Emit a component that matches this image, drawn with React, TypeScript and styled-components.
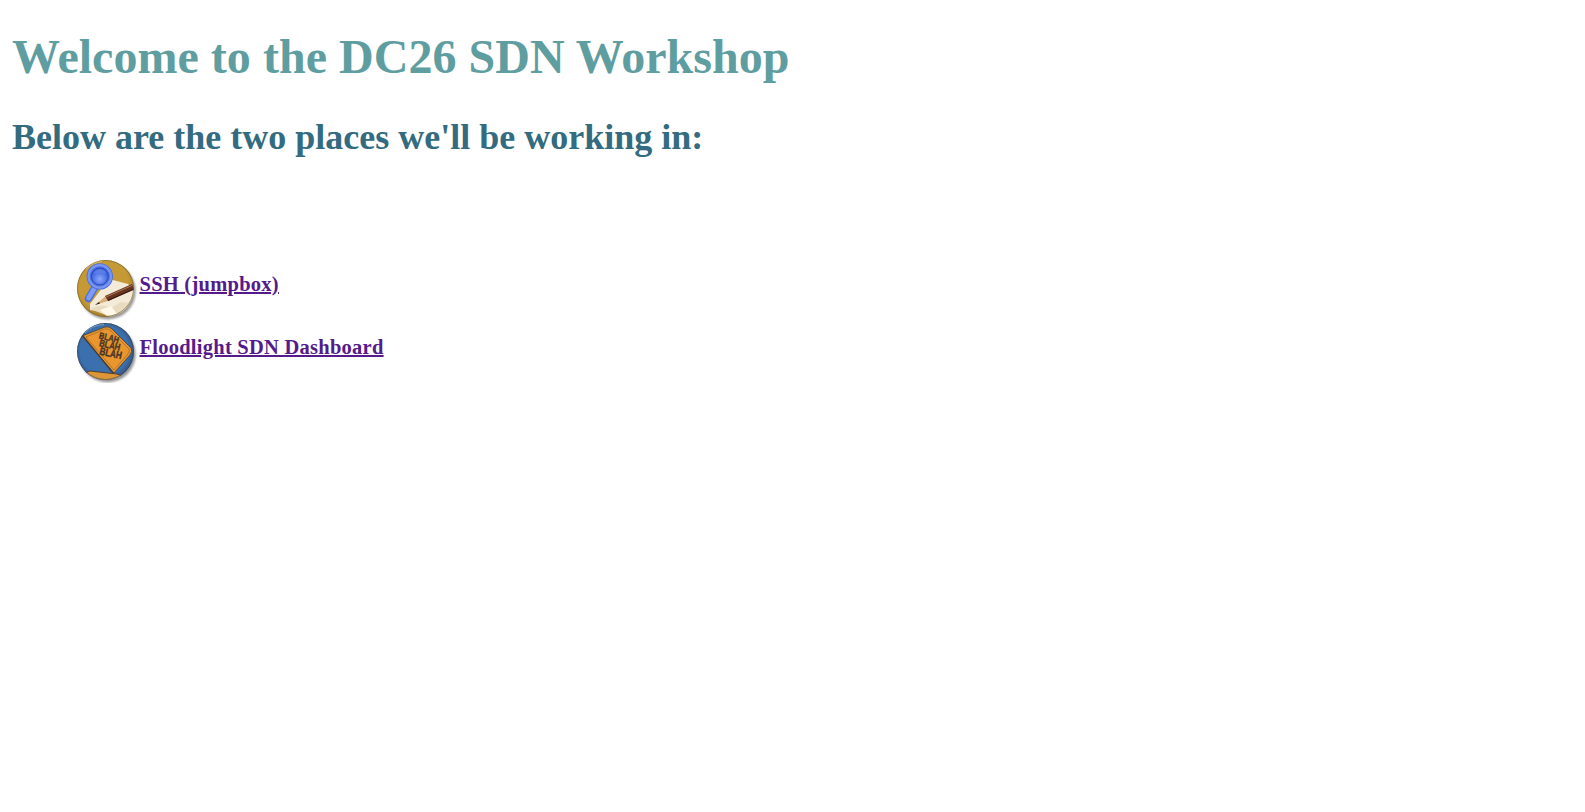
import React from "react";
import styled, { createGlobalStyle } from "styled-components";

const GlobalStyle = createGlobalStyle`
  body {
    margin: 0;
    background: #fff;
    font-family: "Liberation Serif", "Times New Roman", serif;
  }
`;

const Page = styled.main`
  padding: 29px 12px 0;
`;

const Title = styled.h1`
  margin: 0;
  height: 56px;
  line-height: 56px;
  font-size: 48px;
  letter-spacing: 0.03px;
  color: #5f9ea0;
  white-space: nowrap;
`;

const Subtitle = styled.h2`
  margin: 31px 0 0;
  height: 42px;
  line-height: 42px;
  font-size: 36px;
  color: #336b80;
  white-space: nowrap;
`;

const LinkList = styled.ul`
  list-style: none;
  margin: 99px 0 0;
  padding: 0 0 0 63px;
`;

const LinkRow = styled.li`
  display: flex;
  height: 63px;
`;

const Icon = styled.svg`
  flex: none;
  width: 64px;
  height: 63px;
  overflow: visible;
`;

const PlaceLink = styled.a`
  margin: 15px 0 0 0.5px;
  height: 24px;
  line-height: 24px;
  font-size: 20.5px;
  letter-spacing: 0.25px;
  font-weight: bold;
  color: #551a8b;
  text-decoration: underline;
  text-decoration-thickness: 2px;
  white-space: nowrap;
`;

const NotesIcon = () => (
  <Icon viewBox="0 0 64 63" aria-hidden="true">
    <defs>
      <clipPath id="notesDisc"><circle cx="30.5" cy="31.5" r="28.5" /></clipPath>
      <radialGradient id="gold" cx=".45" cy=".4" r=".62">
        <stop offset=".7" stopColor="#c59a35" />
        <stop offset="1" stopColor="#a17c2b" />
      </radialGradient>
      <radialGradient id="lens" cx=".5" cy=".65" r=".6">
        <stop offset="0" stopColor="#8aa9fb" />
        <stop offset="1" stopColor="#2f55d8" />
      </radialGradient>
      <filter id="notesShadow" x="-20%" y="-20%" width="140%" height="140%"><feGaussianBlur stdDeviation="1.3" /></filter>
    </defs>
    <circle cx="32.5" cy="34.3" r="28.2" fill="#777" opacity=".75" filter="url(#notesShadow)" />
    <circle cx="30.5" cy="31.5" r="28.5" fill="url(#gold)" />
    <g clipPath="url(#notesDisc)">
      <path d="M34 22 L53 27 L60 35 L51 58 L15 53 L15 47 Z" fill="#f3ead8" />
      <path d="M15 52 Q28 46 36 51 L46 45 L56 46 L50 60 L36 60 Z" fill="#e9dbc0" />
      <path d="M25 53 L36 49 L42 57 L32 59 Z" fill="#fff8e9" />
      <path d="M20 48 L31 39 L33 44 Z" fill="#d9ad78" />
      <path d="M20 48 L24 45 L25 46.5 Z" fill="#30221b" />
      <path d="M30 39 L57 27 L59 32 L33 44 Z" fill="#67351f" />
      <path d="M31 40 L57 28.5" stroke="#ad7753" strokeWidth="1" />
      <path d="M33 43.5 L59 32" stroke="#35180f" strokeWidth="1.3" />
      <path d="M19.5 31 L13.5 41.5" stroke="#4e70df" strokeWidth="7.5" strokeLinecap="round" />
      <path d="M19 32 L13.5 41" stroke="#7d9af4" strokeWidth="4.5" strokeLinecap="round" />
      <circle cx="24.8" cy="19.4" r="11.2" fill="#5379e4" stroke="#4d70df" strokeWidth="4" />
      <circle cx="24.8" cy="19.4" r="11.2" fill="none" stroke="#7996f2" strokeWidth="2.2" />
      <circle cx="24.8" cy="19.4" r="8.5" fill="url(#lens)" stroke="#284bc0" />
      <path d="M18.5 17 Q20 11.5 26 12 Q31 13 31 17 Q25 14 18.5 17" fill="#7190f0" opacity=".55" />
    </g>
    <circle cx="30.5" cy="31.5" r="28" fill="none" stroke="#796434" strokeWidth="1" opacity=".65" />
    <path d="M11 12 Q18 5 27 4.5" fill="none" stroke="#f8edce" strokeWidth="1" opacity=".45" />
  </Icon>
);

const SignIcon = () => (
  <Icon viewBox="0 0 64 63" aria-hidden="true">
    <defs>
      <clipPath id="signDisc"><circle cx="30.5" cy="31.5" r="28.5" /></clipPath>
      <radialGradient id="sky" cx=".48" cy=".48" r=".53">
        <stop offset=".8" stopColor="#3b70ae" />
        <stop offset="1" stopColor="#35527d" />
      </radialGradient>
      <filter id="signShadow" x="-20%" y="-20%" width="140%" height="140%"><feGaussianBlur stdDeviation="1.3" /></filter>
    </defs>
    <circle cx="32.5" cy="34.3" r="28.2" fill="#777" opacity=".75" filter="url(#signShadow)" />
    <circle cx="30.5" cy="31.5" r="28.5" fill="url(#sky)" />
    <g clipPath="url(#signDisc)">
      <path d="M7 16 L30 7 Q34 6 37 9 L56 28 Q58 31 55 35 L39 53 Z" fill="#e8962d" stroke="#493d33" strokeWidth=".8" />
      <path d="M11 17 L30 9 Q33 8 36 11 L54 29 Q55 31 53 34 L39 50 Z" fill="none" stroke="#82562a" strokeWidth=".5" />
      <path d="M8 16 L38 53" stroke="#463c35" strokeWidth="1.2" />
      <path d="M8 54 L15 51 L42 54 L48 56 L40 64 L10 64 Z" fill="#dc9637" stroke="#54412c" strokeWidth="1" />
      <g fill="#493526" stroke="#493526" strokeWidth=".4" fontFamily="Liberation Sans, sans-serif" fontWeight="bold">
        <text transform="translate(23.6 18.3) rotate(14)" fontSize="9" textLength="20" lengthAdjust="spacingAndGlyphs">BLAH</text>
        <text transform="translate(23.7 26) rotate(13)" fontSize="9.8" textLength="21.3" lengthAdjust="spacingAndGlyphs">BLAH</text>
        <text transform="translate(23.9 34.5) rotate(12)" fontSize="10.6" textLength="22.7" lengthAdjust="spacingAndGlyphs">BLAH</text>
      </g>
    </g>
    <circle cx="30.5" cy="31.5" r="28" fill="none" stroke="#37455a" strokeWidth="1" opacity=".55" />
    <path d="M10 13 Q17 5 29 4.5" fill="none" stroke="#d9e5f4" strokeWidth="1" opacity=".45" />
  </Icon>
);

export default function App() {
  return (
    <>
      <GlobalStyle />
      <Page>
        <Title>Welcome to the DC26 SDN Workshop</Title>
        <Subtitle>Below are the two places we'll be working in:</Subtitle>
        <LinkList>
          <LinkRow>
            <NotesIcon />
            <PlaceLink href="#ssh">SSH (jumpbox)</PlaceLink>
          </LinkRow>
          <LinkRow>
            <SignIcon />
            <PlaceLink href="#dashboard">Floodlight SDN Dashboard</PlaceLink>
          </LinkRow>
        </LinkList>
      </Page>
    </>
  );
}
